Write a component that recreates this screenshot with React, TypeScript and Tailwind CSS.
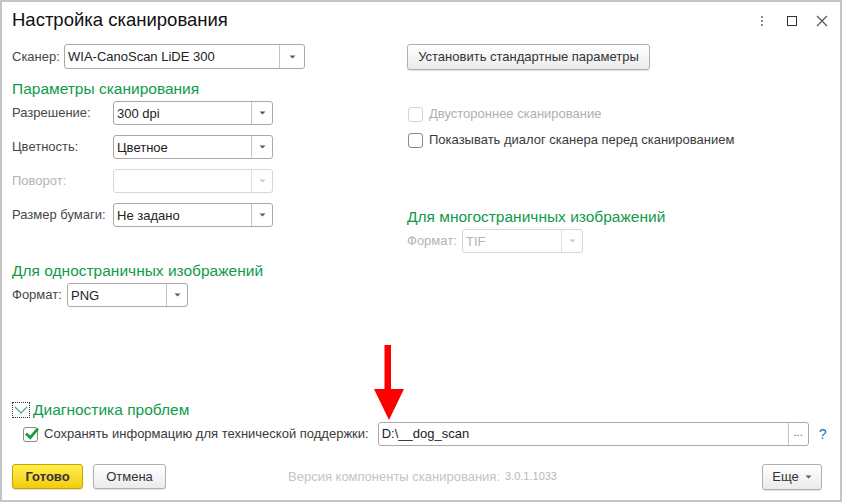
import React from "react";

const Arrow = ({ disabled }: { disabled?: boolean }) => (
  <svg width="7" height="4" viewBox="0 0 7 4">
    <path d="M0.5 0.5h6L3.5 3.5z" fill={disabled ? "#c8c8c8" : "#5a5a5a"} />
  </svg>
);

function Select({
  className,
  value,
  disabled,
  ddClass = "w-[21px]",
}: {
  className: string;
  value?: string;
  disabled?: boolean;
  ddClass?: string;
}) {
  return (
    <div
      className={
        "flex rounded-[3px] border bg-white " +
        (disabled ? "border-[#d6d6d6] text-[#b4b4b4] " : "border-[#a9a9a9] text-[#222] ") +
        className
      }
    >
      <div className="flex-1 flex items-center pl-[3px] text-[13px] leading-none">{value}</div>
      <div
        className={
          "flex items-center justify-center border-l " +
          (disabled ? "border-[#e0e0e0] " : "border-[#c4c4c4] ") +
          ddClass
        }
      >
        <Arrow disabled={disabled} />
      </div>
    </div>
  );
}

function Checkbox({ disabled, checked }: { disabled?: boolean; checked?: boolean }) {
  return (
    <div
      className={
        "w-[15px] h-[15px] rounded-[3px] border bg-white relative shrink-0 " +
        (disabled ? "border-[#d4d4d4]" : "border-[#8a8a8a]")
      }
    >
      {checked && (
        <svg className="absolute left-[1px] top-[-1px]" width="14" height="14" viewBox="0 0 14 14">
          <path d="M2 7.5 L5.2 10.6 L12 2.6" stroke="#1d9a3c" strokeWidth="2.8" fill="none" strokeLinecap="square" />
        </svg>
      )}
    </div>
  );
}

function Button({ children, className }: { children: React.ReactNode; className: string }) {
  return (
    <div
      className={
        "flex items-center justify-center rounded-[3px] border border-[#b0b0b0] bg-linear-to-b from-white to-[#ebebeb] shadow-[0_1px_1px_rgba(0,0,0,0.12)] text-[13px] text-[#333] " +
        className
      }
    >
      {children}
    </div>
  );
}

export default function App() {
  return (
    <div className="w-[842px] h-[502px] border-2 border-[#c4c4c4] bg-white relative flex flex-col font-['Liberation_Sans',Arial,sans-serif] text-[13px] text-[#474747]">
      {/* Title bar */}
      <div className="h-[37px] flex items-center pl-[10px] pr-[3px] shrink-0">
        <div className="text-[18.5px] text-[#111] leading-none">Настройка сканирования</div>
        <div className="flex-1" />
        <div className="w-[30px] h-[30px] flex items-center justify-center">
          <div className="flex flex-col gap-[2px]">
            <div className="w-[2px] h-[2px] bg-[#8c8c8c]" />
            <div className="w-[2px] h-[2px] bg-[#8c8c8c]" />
            <div className="w-[2px] h-[2px] bg-[#8c8c8c]" />
          </div>
        </div>
        <div className="w-[30px] h-[30px] flex items-center justify-center">
          <div className="w-[10px] h-[10px] border border-[#333]" />
        </div>
        <div className="w-[30px] h-[30px] flex items-center justify-center">
          <svg width="12" height="12" viewBox="0 0 12 12">
            <path d="M1 1L11 11M11 1L1 11" stroke="#555" strokeWidth="1.2" />
          </svg>
        </div>
      </div>

      {/* Main content */}
      <div className="flex pl-[10px] pt-[5px]">
        {/* Left column */}
        <div className="w-[395px] flex flex-col">
          <div className="flex items-center h-[25px]">
            <span className="w-[52px]">Сканер:</span>
            <Select className="w-[241px] h-[25px]" value="WIA-CanoScan LiDE 300" ddClass="w-[25px]" />
          </div>
          <div className="mt-[10px] h-[19px] leading-[19px] text-[15.5px] text-[#109a4b]">Параметры сканирования</div>
          <div className="mt-[3px] flex flex-col gap-[10px]">
            <div className="flex items-center h-[24px]">
              <span className="w-[101px]">Разрешение:</span>
              <Select className="w-[160px] h-[24px]" value="300 dpi" />
            </div>
            <div className="flex items-center h-[24px]">
              <span className="w-[101px]">Цветность:</span>
              <Select className="w-[160px] h-[24px]" value="Цветное" />
            </div>
            <div className="flex items-center h-[24px]">
              <span className="w-[101px] text-[#b4b4b4]">Поворот:</span>
              <Select className="w-[160px] h-[24px]" value="" disabled />
            </div>
            <div className="flex items-center h-[24px]">
              <span className="w-[101px]">Размер бумаги:</span>
              <Select className="w-[160px] h-[24px]" value="Не задано" />
            </div>
          </div>
          <div className="mt-[34px] h-[19px] leading-[19px] text-[15.5px] text-[#109a4b]">Для одностраничных изображений</div>
          <div className="mt-[3px] flex items-center h-[24px]">
            <span className="w-[55px]">Формат:</span>
            <Select className="w-[121px] h-[24px]" value="PNG" />
          </div>
        </div>

        {/* Right column */}
        <div className="flex flex-col">
          <Button className="w-[243px] h-[26px]">Установить стандартные параметры</Button>
          <div className="mt-[34px] h-[20px] flex items-center pl-[1px] gap-[6px] text-[#b0b0b0]">
            <Checkbox disabled />
            <span>Двустороннее сканирование</span>
          </div>
          <div className="mt-[6px] h-[20px] flex items-center pl-[1px] gap-[6px] text-[#3a3a3a]">
            <Checkbox />
            <span>Показывать диалог сканера перед сканированием</span>
          </div>
          <div className="mt-[57px] h-[19px] leading-[19px] text-[15.5px] text-[#109a4b]">Для многостраничных изображений</div>
          <div className="mt-[3px] flex items-center h-[24px]">
            <span className="w-[55px] text-[#b4b4b4]">Формат:</span>
            <Select className="w-[121px] h-[24px]" value="TIF" disabled />
          </div>
        </div>
      </div>

      <div className="flex-1" />

      {/* Diagnostics */}
      <div className="flex items-center h-[16px] pl-[10px]">
        <div className="w-[18px] h-[16px] border border-dotted border-[#333] flex items-center justify-center">
          <svg width="14" height="8" viewBox="0 0 14 8">
            <path d="M1 1L7 7L13 1" stroke="#3f9d86" strokeWidth="1.1" fill="none" />
          </svg>
        </div>
        <span className="ml-[3px] text-[15.5px] text-[#109a4b] leading-none">Диагностика проблем</span>
      </div>
      <div className="mt-[4px] flex items-center h-[24px] pl-[21px]">
        <Checkbox checked />
        <span className="ml-[6px] text-[#3a3a3a]">Сохранять информацию для технической поддержки:</span>
        <div className="ml-[9px] w-[431px] h-[24px] flex rounded-[3px] border border-[#a9a9a9] bg-white">
          <div className="flex-1 flex items-center pl-[3px] text-[#222]">D:\__dog_scan</div>
          <div className="w-[20px] flex items-center justify-center border-l border-[#c4c4c4] text-[#555] text-[11px] pb-[3px]">...</div>
        </div>
        <span className="ml-[10px] text-[#1a6fb8] text-[14px]">?</span>
      </div>

      {/* Footer */}
      <div className="mt-[18px] mb-[11px] flex items-center h-[25px] pl-[10px] pr-[18px]">
        <div className="w-[71px] h-[25px] flex items-center justify-center rounded-[3px] border border-[#c4a400] bg-linear-to-b from-[#fff04a] to-[#f3cb00] shadow-[0_1px_1px_rgba(0,0,0,0.12)] text-[13px] font-bold text-[#333]">
          Готово
        </div>
        <Button className="ml-[10px] w-[73px] h-[25px]">Отмена</Button>
        <span className="ml-[122px] text-[#c4c4c4]">Версия компоненты сканирования:</span>
        <span className="ml-[5px] text-[11px] text-[#b8b8b8]">3.0.1.1033</span>
        <div className="flex-1" />
        <Button className="w-[60px] h-[26px] gap-[6px]">
          <span>Еще</span>
          <Arrow />
        </Button>
      </div>

      {/* Red arrow annotation */}
      <svg className="absolute left-[368px] top-[341px]" width="40" height="80" viewBox="0 0 40 80">
        <path d="M14.5 2h6.5v46h-6.5z" fill="#ff0000" />
        <path d="M4 46h30L19 77z" fill="#ff0000" />
      </svg>
    </div>
  );
}
